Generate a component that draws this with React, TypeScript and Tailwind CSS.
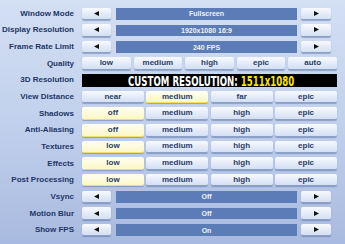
import { ReactNode } from 'react';

type Row =
  | { label: string; kind: 'arrow'; value: string }
  | { label: string; kind: 'pick'; options: string[]; selected: number }
  | { label: string; kind: 'custom' };

const ROWS: Row[] = [
  { label: 'Window Mode', kind: 'arrow', value: 'Fullscreen' },
  { label: 'Display Resolution', kind: 'arrow', value: '1920x1080 16:9' },
  { label: 'Frame Rate Limit', kind: 'arrow', value: '240 FPS' },
  { label: 'Quality', kind: 'pick', options: ['low', 'medium', 'high', 'epic', 'auto'], selected: -1 },
  { label: '3D Resolution', kind: 'custom' },
  { label: 'View Distance', kind: 'pick', options: ['near', 'medium', 'far', 'epic'], selected: 1 },
  { label: 'Shadows', kind: 'pick', options: ['off', 'medium', 'high', 'epic'], selected: 0 },
  { label: 'Anti-Aliasing', kind: 'pick', options: ['off', 'medium', 'high', 'epic'], selected: 0 },
  { label: 'Textures', kind: 'pick', options: ['low', 'medium', 'high', 'epic'], selected: 0 },
  { label: 'Effects', kind: 'pick', options: ['low', 'medium', 'high', 'epic'], selected: 0 },
  { label: 'Post Processing', kind: 'pick', options: ['low', 'medium', 'high', 'epic'], selected: 0 },
  { label: 'Vsync', kind: 'arrow', value: 'Off' },
  { label: 'Motion Blur', kind: 'arrow', value: 'Off' },
  { label: 'Show FPS', kind: 'arrow', value: 'On' },
];

function Btn({ children, active, className = '' }: { children: ReactNode; active?: boolean; className?: string }) {
  return (
    <div
      className={`h-[12.5px] flex items-center justify-center rounded-[2px] border-b text-[8px] font-bold leading-none text-[#2b3d66] shadow-[0_1px_1px_rgba(50,70,120,0.35)] ${
        active
          ? 'bg-gradient-to-b from-[#fffff4] to-[#fbf7c4] border-[#efe06a]'
          : 'bg-gradient-to-b from-[#f8faff] to-[#d3dff3] border-[#8aa0c8]'
      } ${className}`}
    >
      {children}
    </div>
  );
}

function Tri({ dir }: { dir: 'left' | 'right' }) {
  return (
    <svg width="5" height="5" viewBox="0 0 5 5">
      <polygon points={dir === 'left' ? '5,0 5,5 0,2.5' : '0,0 0,5 5,2.5'} fill="#111" />
    </svg>
  );
}

export default function App() {
  return (
    <div className="w-[345px] h-[244px] overflow-hidden bg-gradient-to-b from-[#d3dff3] via-[#c1d0ec] to-[#a8badf] font-['Liberation_Sans',Arial,sans-serif] pt-[5.5px]">
      {ROWS.map((row) => (
        <div key={row.label} className="h-[16.65px] flex items-center">
          <div className="w-[74px] shrink-0 text-right text-[8px] font-bold leading-none text-[#233666] whitespace-nowrap">
            {row.label}
          </div>
          <div className="ml-[8px] w-[255px] flex items-center">
            {row.kind === 'arrow' && (
              <div className="w-[249px] flex items-center">
                <Btn className="w-[29px]">
                  <Tri dir="left" />
                </Btn>
                <div className="ml-[5px] w-[181px] h-[11.5px] flex items-center justify-center bg-[#5b7cb6] text-[7px] font-bold leading-none text-[#eef2fa]">
                  {row.value}
                </div>
                <Btn className="ml-[4px] w-[30px]">
                  <Tri dir="right" />
                </Btn>
              </div>
            )}
            {row.kind === 'pick' && (
              <div className={`w-full flex items-center ${row.options.length === 5 ? 'gap-[3px]' : 'gap-[2.5px]'}`}>
                {row.options.map((opt, i) => (
                  <Btn key={opt} active={i === row.selected} className="flex-1">
                    {opt}
                  </Btn>
                ))}
              </div>
            )}
            {row.kind === 'custom' && (
              <div className="w-full h-[12.5px] bg-black flex items-center">
                <div className="ml-[46px] scale-y-[1.5] whitespace-nowrap font-['DejaVu_Sans_Condensed','Liberation_Sans_Narrow',sans-serif] text-[9.6px] font-bold leading-none">
                  <span className="text-white">CUSTOM RESOLUTION: </span>
                  <span className="text-[#f7e600]">1511x1080</span>
                </div>
              </div>
            )}
          </div>
        </div>
      ))}
    </div>
  );
}
